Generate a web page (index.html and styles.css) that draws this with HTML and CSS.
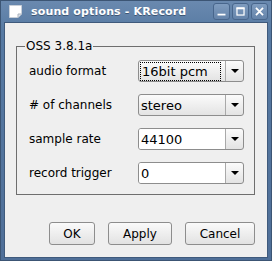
FILE: index.html
```html
<!DOCTYPE html>
<html>
<head>
<meta charset="utf-8">
<link rel="stylesheet" href="styles.css">
</head>
<body>
<div class="window">
  <div class="titlebar">
    <svg class="appicon" width="15" height="15" viewBox="0 0 15 15">
      <path d="M1.5 1.5 H13.5 V10 L10 13.5 H1.5 Z" fill="#ffffff" stroke="#c8cfd8"/>
      <path d="M13.5 10 H10 V13.5" fill="#dfe3e8" stroke="#aab3bf"/>
    </svg>
    <span class="title">sound options - KRecord</span>
    <div class="wbtns">
      <span class="wbtn"><svg width="17" height="17" viewBox="0 0 17 17"><rect x="4" y="11" width="9" height="2" fill="#fff"/></svg></span>
      <span class="wbtn"><svg width="17" height="17" viewBox="0 0 17 17"><rect x="4.5" y="4.5" width="8" height="8" fill="none" stroke="#fff" stroke-width="1.4"/><rect x="4" y="4" width="9" height="2" fill="#fff"/></svg></span>
      <span class="wbtn"><svg width="17" height="17" viewBox="0 0 17 17"><path d="M4.5 4.5 L12.5 12.5 M12.5 4.5 L4.5 12.5" stroke="#fff" stroke-width="2"/></svg></span>
    </div>
  </div>
  <div class="content">
    <fieldset class="group">
      <legend>OSS 3.8.1a</legend>
      <div class="rows">
        <span class="lbl">audio format</span>
        <div class="combo"><span class="val"><span class="focus">16bit pcm</span></span><span class="arrow"></span></div>
        <span class="lbl"># of channels</span>
        <div class="combo"><span class="val">stereo</span><span class="arrow"></span></div>
        <span class="lbl">sample rate</span>
        <div class="combo edit"><span class="val">44100</span><span class="arrow"></span></div>
        <span class="lbl">record trigger</span>
        <div class="combo edit"><span class="val">0</span><span class="arrow"></span></div>
      </div>
    </fieldset>
    <div class="buttons">
      <button class="btn ok">OK</button>
      <button class="btn apply">Apply</button>
      <button class="btn cancel">Cancel</button>
    </div>
  </div>
</div>
</body>
</html>
```
FILE: styles.css
```css
html, body { margin: 0; padding: 0; }
body {
  width: 272px; height: 261px; overflow: hidden;
  font-family: "DejaVu Sans", sans-serif; font-size: 12px; color: #000;
}
.window {
  width: 272px; height: 261px; box-sizing: border-box;
  background: linear-gradient(#6a89af, #577aa3 30px, #4f6f98);
  border: 1px solid #3c5574;
  display: flex; flex-direction: column;
  padding: 0 3px 2px 3px;
}
.titlebar {
  height: 21px; display: flex; align-items: center;
  position: relative;
}
.appicon { margin: 0 0 0 4px; flex: none; }
.title {
  color: #fff; font-weight: bold; font-size: 11px;
  margin-left: 8px; letter-spacing: 0.15px;
  text-shadow: 0 1px 0 #3d5573;
}
.wbtns { margin-left: auto; display: flex; gap: 2px; margin-right: 0; }
.wbtn {
  width: 17px; height: 17px; box-sizing: border-box;
  border: 1px solid #48668c; border-radius: 3px;
  background: linear-gradient(#7f9cbf, #6584aa);
  display: flex; align-items: center; justify-content: center;
}
.wbtn svg { width: 15px; height: 15px; }
.content {
  flex: 1; background: #efefef;
  border: 1px solid #3f5a7c;
  padding: 0 0 0 11px;
  display: flex; flex-direction: column;
}
.group {
  margin: 17px 0 0 0; padding: 0; width: 239px; height: 155px; box-sizing: border-box;
  border: 1px solid #6e6e6e;
}
.group legend {
  padding: 0 1px; margin-left: 8px; font-size: 12px; line-height: 12px;
}
.rows {
  display: grid; grid-template-columns: 109px 106px;
  row-gap: 12px; align-items: center;
  padding: 8px 0 0 12px;
}
.lbl { line-height: 22px; }
.combo {
  height: 22px; box-sizing: border-box;
  border: 1px solid #8d8d8d; border-radius: 3px;
  background: linear-gradient(#fbfbfb, #e3e3e3);
  display: flex;
}
.combo.edit .val { background: #fff; border-radius: 2px 0 0 2px; }
.val {
  flex: 1; display: flex; align-items: center; padding-left: 2px;
  font-size: 13px;
}
.focus { outline: 1px dotted #000; padding: 0 12px 0 1px; margin-left: 0; line-height: 17px; }
.arrow {
  width: 17px; border-left: 1px solid #a9a9a9; position: relative;
}
.arrow::after {
  content: ""; position: absolute; left: 5px; top: 8px;
  border-left: 4px solid transparent; border-right: 4px solid transparent;
  border-top: 4px solid #000;
}
.buttons {
  display: flex; justify-content: flex-end; gap: 13px;
  margin-top: 27px; padding-right: 12px;
}
.btn {
  height: 23px; box-sizing: border-box;
  font-family: "DejaVu Sans", sans-serif; font-size: 12px; color: #000;
  border: 1px solid #8d8d8d; border-radius: 3px;
  background: linear-gradient(#fafafa, #e2e2e2);
  padding: 0;
}
.ok { width: 46px; }
.apply { width: 64px; }
.cancel { width: 70px; }
```
